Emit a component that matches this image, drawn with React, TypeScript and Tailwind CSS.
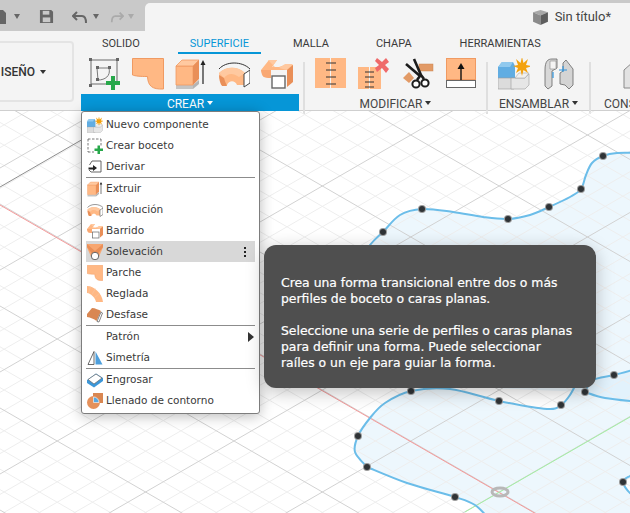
import type { ReactNode } from 'react'

type Pt = [number, number]

// catmull-rom through the points, as cubic segments
function spline(pts: Pt[], move = true) {
  let d = move ? `M${pts[0][0]} ${pts[0][1]}` : `L${pts[0][0]} ${pts[0][1]}`
  for (let i = 0; i < pts.length - 1; i++) {
    const p0 = pts[i - 1] || pts[i]
    const p1 = pts[i]
    const p2 = pts[i + 1]
    const p3 = pts[i + 2] || p2
    const c1x = p1[0] + (p2[0] - p0[0]) / 6
    const c1y = p1[1] + (p2[1] - p0[1]) / 6
    const c2x = p2[0] - (p3[0] - p1[0]) / 6
    const c2y = p2[1] - (p3[1] - p1[1]) / 6
    d += ` C${c1x} ${c1y} ${c2x} ${c2y} ${p2[0]} ${p2[1]}`
  }
  return d
}

const SLOPE = 0.577

function Viewport() {
  const upper: Pt[] = [[345, 280], [370, 245], [383, 232], [400, 215], [422, 209], [453, 212], [483, 217], [508, 219], [530, 215], [549, 207], [570, 197], [581, 189], [586, 175], [592, 163], [603, 156], [617, 153], [640, 153]]
  const lowerA: Pt[] = [[585, 392], [605, 398], [640, 402]]
  const lowerB: Pt[] = [[367, 467], [355, 452], [358, 436], [370, 418], [385, 403], [411, 391], [450, 389], [499, 401], [547, 409], [561, 405], [570, 395], [578, 380]]
  const rise: Pt[] = [[585, 392], [593, 380], [614, 375], [640, 368]]
  const edge: Pt[] = [[640, 472], [630, 476], [623, 482], [630, 493], [640, 497]]
  const bottom: Pt[] = [[367, 467], [407, 483], [455, 497], [475, 505], [490, 520]]

  const shapeA = `${spline(upper)} L660 153 L660 402 ${spline(lowerA.slice().reverse(), false)} L420 385 Z`
  const shapeB = `${spline(lowerB)} L593 380 ${spline(rise.slice(1), false)} L660 368 L660 472 ${spline(edge, false)} L640 530 L490 530 ${spline(bottom.slice().reverse(), false)} Z`

  const minor: number[] = []
  const major: number[] = []
  for (let i = -15; i < 60; i++) {
    if (i % 5 === 0) major.push(i)
    else minor.push(i)
  }

  const down = (c: number) => `M0 ${c}L630 ${c + 630 * SLOPE}`
  const up = (c: number) => `M0 ${c}L630 ${c - 630 * SLOPE}`

  const dots: Pt[] = [
    [383, 232], [422, 209], [508, 219], [549, 207], [581, 189], [603, 156],
    [411, 391], [499, 401], [561, 405], [585, 392], [614, 375],
    [358, 436], [367, 467], [455, 497], [623, 482],
  ]

  return (
    <svg className="absolute left-0 top-[111px]" width="630" height="402" viewBox="0 111 630 402">
      <path d={shapeA} fill="#d4ecfb" fillOpacity="0.42" />
      <path d={shapeB} fill="#d4ecfb" fillOpacity="0.42" />
      {minor.map((i) => (
        <g key={i} stroke="#eeeeee" strokeWidth="1" fill="none">
          <path d={down(-204 + i * 20.4)} />
          <path d={up(168 + i * 20.4)} />
        </g>
      ))}
      {major.map((i) => (
        <g key={i} stroke="#d2d2d2" strokeWidth="1" fill="none">
          <path d={down(-204 + i * 20.4)} />
          <path d={up(168 + i * 20.4)} />
        </g>
      ))}
      <path d="M0 187L90 135" stroke="#8e8e8e" strokeWidth="1" />
      <path d="M0 205L630 568" stroke="#f59a9a" strokeWidth="1" />
      <path d="M465 512L630 417" stroke="#a4f0a4" strokeWidth="1" />
      <path d={spline(upper)} fill="none" stroke="#6bbde9" strokeWidth="2" />
      <path d={spline(lowerA)} fill="none" stroke="#6bbde9" strokeWidth="2" />
      <path d={spline(lowerB)} fill="none" stroke="#6bbde9" strokeWidth="2" />
      <path d={spline(rise)} fill="none" stroke="#6bbde9" strokeWidth="2" />
      <path d={spline(edge)} fill="none" stroke="#6bbde9" strokeWidth="2" />
      <path d={spline(bottom)} fill="none" stroke="#6bbde9" strokeWidth="2" />
      {dots.map(([x, y]) => (
        <g key={`${x}-${y}`}>
          <circle cx={x} cy={y} r="4" fill="#9a9a9a" />
          <circle cx={x} cy={y} r="3" fill="#2f3336" />
        </g>
      ))}
      <ellipse cx="500" cy="492" rx="8" ry="4" fill="none" stroke="#b8b8b8" strokeWidth="3" />
    </svg>
  )
}

/* icons, drawn on a 32 box so the toolbar and the menu can share them */
function Ico({ size = 32, children }: { size?: number; children: ReactNode }) {
  return (
    <svg width={size} height={size} viewBox="0 0 32 32" className="shrink-0">
      {children}
    </svg>
  )
}

function SketchIcon() {
  return (
    <Ico>
      <path d="M2 2H28V26H2Z" fill="none" stroke="#6a6a6a" strokeWidth="1" />
      <path d="M8 10H20C22 18 16 22 9 22Z" fill="none" stroke="#7a7a7a" strokeWidth="1" />
      <g fill="#666">
        <rect x="0" y="0" width="3" height="3" />
        <rect x="27" y="0" width="3" height="3" />
        <rect x="0" y="26" width="3" height="3" />
        <rect x="7" y="8" width="3" height="3" />
        <rect x="19" y="8" width="3" height="3" />
        <rect x="7" y="20" width="3" height="3" />
      </g>
      <path d="M22 18H26V23H31V27H26V32H22V27H17V23H22Z" fill="#27a84a" />
    </Ico>
  )
}

function SketchMenuIcon() {
  return (
    <Ico size={16}>
      <path d="M2 2H28M2 2V28M28 2V16M2 28H14" fill="none" stroke="#555" strokeWidth="1.6" strokeDasharray="5 3" />
      <path d="M21 15H26V21H32V26H26V32H21V26H15V21H21Z" fill="#27a84a" />
    </Ico>
  )
}

function PatchIcon({ size = 32 }: { size?: number }) {
  return (
    <Ico size={size}>
      <path d="M0.5 0.5H31.5V31C20 31.5 16 28 15.5 18.5C8 18.5 3 18 0.5 17Z" fill="#ffb884" stroke="#f09a62" strokeWidth="1" />
    </Ico>
  )
}

function ExtrudeIcon({ size = 32 }: { size?: number }) {
  return (
    <Ico size={size}>
      <path d="M1 27H18V31H1Z" fill="#c4c4c4" />
      <path d="M18 27L24 22V26L18 31Z" fill="#b4b4b4" />
      <path d="M1 8H18V27H1Z" fill="#ffb884" stroke="#f09a62" strokeWidth="0.8" />
      <path d="M1 8L7 2H24L18 8Z" fill="#ffc9a0" stroke="#f09a62" strokeWidth="0.8" />
      <path d="M18 8L24 2V21L18 27Z" fill="#e98f58" />
      <path d="M28 26V4" stroke="#222" strokeWidth="1.2" />
      <path d="M25.5 7L28 2L30.5 7Z" fill="#222" />
    </Ico>
  )
}

function RevolveIcon({ size = 32 }: { size?: number }) {
  return (
    <Ico size={size}>
      <path d="M1 11C8 3 24 3 32 11" fill="none" stroke="#333" strokeWidth="1" />
      <path d="M1 15C8 8 20 8 27 15L26 27H19C17 22 11 22 9 27H3Z" fill="#ffb884" />
      <path d="M1 15C8 8 20 8 27 15L21 19C15 15 10 15 6 20Z" fill="#ffc9a0" />
      <path d="M1 17L6 20C7 24 8 25 9 28H4C2 25 1 21 1 17Z" fill="#e98f58" />
      <path d="M26 16L32 12V25L26 29Z" fill="#fff" stroke="#444" strokeWidth="1" />
    </Ico>
  )
}

function SweepIcon({ size = 32 }: { size?: number }) {
  return (
    <Ico size={size}>
      <path d="M0 12L8 2H16L11 9H18L24 7H32V24H26V12H6V19L2 18Z" fill="#ffb884" />
      <path d="M0 12C1 19 2 20 10 20V12Z" fill="#f9a873" />
      <path d="M7 2H16L11 9H14" fill="#ffc9a0" />
      <path d="M18 10L24 6H32L26 12Z" fill="#ffc9a0" />
      <path d="M26 12L32 7V24L26 29Z" fill="#e98f58" />
      <rect x="11" y="18" width="13" height="12" fill="#fff" stroke="#666" strokeWidth="1.4" />
    </Ico>
  )
}

function NewComponentIcon({ size = 32 }: { size?: number }) {
  return (
    <Ico size={size}>
      <path d="M0 9L4 4H15L17 8V20H0Z" fill="#61ade2" />
      <path d="M0 9L4 4H15L12 9Z" fill="#90c9ee" />
      <path d="M0 20H16V31H0Z" fill="#dcdcdc" stroke="#9a9a9a" strokeWidth="0.6" />
      <path d="M13 20H27L31 16V27L27 31H13Z" fill="#e6e6e6" stroke="#9a9a9a" strokeWidth="0.6" />
      <path d="M17 20L21 15H31L27 20Z" fill="#f0f0f0" stroke="#aaa" strokeWidth="0.6" />
      <path d="M24 -1L25.5 5L30 1L28 7L34 8L28 10L30 15L25.5 12L24 18L22.5 12L18 15L20 10L15 8L20 7L18 1L22.5 5Z" fill="#f3a20f" />
    </Ico>
  )
}

function StitchIcon() {
  return (
    <Ico>
      <rect x="0" y="0" width="15" height="30" fill="#ffb884" />
      <rect x="16" y="0" width="15" height="30" fill="#ffb884" />
      <path d="M11 5H21M11 12H21M11 19H21M11 26H21" stroke="#333" strokeWidth="1" />
    </Ico>
  )
}

function RemoveStitchIcon() {
  return (
    <Ico>
      <rect x="0" y="9" width="11" height="22" fill="#ffb884" />
      <rect x="12" y="9" width="11" height="22" fill="#ffb884" />
      <path d="M7 14H16M7 19H16M7 24H16M7 29H16" stroke="#333" strokeWidth="1" />
      <path d="M19 0L24 4L28 0L31 4L27 7L31 11L28 15L24 10L19 14L17 10L21 7L17 3Z" fill="#ef6a6a" />
    </Ico>
  )
}

function ScissorsIcon() {
  return (
    <Ico>
      <rect x="16" y="6" width="14" height="7" fill="#e29a66" stroke="#c98653" strokeWidth="0.5" />
      <path d="M0 20L6 14L11 20L6 25Z" fill="#e29a66" />
      <path d="M11 1L18 17L21 21" fill="none" stroke="#1c1c1c" strokeWidth="2.6" />
      <path d="M3 6L17 18L14 22" fill="none" stroke="#1c1c1c" strokeWidth="2.6" />
      <circle cx="13" cy="26" r="3.6" fill="#fff" stroke="#1c1c1c" strokeWidth="2" />
      <circle cx="22" cy="25" r="3.6" fill="#fff" stroke="#1c1c1c" strokeWidth="2" />
    </Ico>
  )
}

function PressIcon() {
  return (
    <Ico>
      <rect x="0.5" y="0.5" width="29" height="21" fill="#ffb884" stroke="#f09a62" />
      <rect x="0.5" y="22.5" width="29" height="7" fill="#fff" stroke="#666" />
      <path d="M15 22V8" stroke="#111" strokeWidth="1.4" />
      <path d="M11.5 11L15 5L18.5 11Z" fill="#111" />
    </Ico>
  )
}

function JointIcon() {
  return (
    <Ico>
      <path d="M1 12C1 3 4 1 8 1H13V10L8 13V28L4 31L1 28Z" fill="#d8d8d8" stroke="#666" strokeWidth="0.8" />
      <path d="M6 3H12V11H6Z" fill="#f4f4f4" stroke="#888" strokeWidth="0.6" />
      <path d="M16 15L19 13V5L22 2L29 11V27L25 31L21 27L16 26Z" fill="#d4d4d4" stroke="#666" strokeWidth="0.8" />
      <path d="M9 14V20" stroke="#2e94dd" strokeWidth="1.2" />
      <path d="M19 8V14M15 12H23" stroke="#2e94dd" strokeWidth="1.1" />
    </Ico>
  )
}

function DeriveIcon() {
  return (
    <Ico size={16}>
      <path d="M10 4H28V26H8L4 22" fill="#fff" stroke="#555" strokeWidth="1.8" />
      <path d="M10 4L5 12" stroke="#555" strokeWidth="1.8" />
      <path d="M3 17H12V12L20 18L12 24V21H3Z" fill="#222" />
    </Ico>
  )
}

function LoftIcon() {
  return (
    <Ico size={16}>
      <path d="M0 0H32V7L24 25H8L0 7Z" fill="#f7a670" />
      <path d="M0 0L16 14L32 0V6L20 22H12L0 6Z" fill="#e98f58" />
      <circle cx="16" cy="24" r="7.5" fill="#fff" stroke="#555" strokeWidth="1.8" />
    </Ico>
  )
}

function RuledIcon() {
  return (
    <Ico size={16}>
      <path d="M0 0C14 0 30 14 32 32H18C17 25 8 14 0 14Z" fill="#ffb884" />
      <path d="M7 1L3 14M17 5L10 17M26 14L15 23" stroke="#f4cba9" strokeWidth="1" />
    </Ico>
  )
}

function OffsetIcon() {
  return (
    <Ico size={16}>
      <path d="M0 14L10 2C16 2 24 6 28 8L19 28C14 24 7 21 0 20Z" fill="#d98752" />
      <path d="M28 10L31 12L24 30L20 29Z" fill="#fff" stroke="#555" strokeWidth="1.4" />
    </Ico>
  )
}

function MirrorIcon() {
  return (
    <Ico size={16}>
      <path d="M2 29L14 3V29Z" fill="#fff" stroke="#444" strokeWidth="1.6" />
      <path d="M17 3L31 29H17Z" fill="#4e9fdc" />
    </Ico>
  )
}

function ThickenIcon() {
  return (
    <Ico size={16}>
      <path d="M0 16L18 3L32 12V18L14 31L0 22Z" fill="#3d97d8" />
      <path d="M2 15L18 4L30 12L14 24Z" fill="#fff" stroke="#666" strokeWidth="1.4" />
    </Ico>
  )
}

function BoundaryIcon() {
  return (
    <Ico size={16}>
      <rect x="12" y="0" width="20" height="20" fill="#d98752" />
      <circle cx="13" cy="19" r="13" fill="#e5915b" />
      <path d="M13 8A11 11 0 0 1 24 19H13Z" fill="#58a9e2" stroke="#fff" strokeWidth="1.2" />
    </Ico>
  )
}

const uiFont = "font-['Roboto',sans-serif]"

function Group({ label, width, active, children }: { label: string; width: string; active?: boolean; children?: ReactNode }) {
  return (
    <div className={`flex flex-col shrink-0 ${width}`}>
      <div className={`flex items-start gap-[11px] h-[36px] ${active ? 'pl-[8px]' : 'pl-[10px]'}`}>{children}</div>
      <div
        className={`h-[17px] pt-[2px] flex items-center justify-center gap-[3px] text-[12px] ${active ? 'bg-[#0696d7] text-white' : 'text-[#444]'}`}
      >
        {label}
        <span className={`border-x-[3.5px] border-t-[4px] border-x-transparent mb-[2px] ${active ? 'border-t-white' : 'border-t-[#333]'}`} />
      </div>
    </div>
  )
}

function Sep() {
  return <div className="w-[2px] h-[52px] mt-[4px] bg-[#dfdfdf] shrink-0" />
}

function Toolbar() {
  return (
    <div className={`h-[80px] bg-[#f4f4f4] border-b border-[#cfcfcf] flex ${uiFont}`}>
      <div className="w-[82px] h-[61px] mt-[10px] shrink-0 -ml-[8px] rounded-[4px] border-2 border-[#e4e4e4] flex items-center justify-end pr-[26px] text-[12px] font-medium text-[#333]">
        ISEÑO
        <span className="ml-[5px] border-x-[3.5px] border-t-[4px] border-x-transparent border-t-[#333]" />
      </div>
      <div className="flex flex-col min-w-0 ml-[7px]">
        <div className="flex h-[23px] text-[11px] text-[#3a3a3a] relative">
          <span className="ml-[21px] mt-[5px]">SOLIDO</span>
          <span className="ml-[38px] pt-[5px] px-[12px] h-[23px] border-b-[2px] border-[#0696d7] text-[#0696d7]">SUPERFICIE</span>
          <span className="ml-[32px] mt-[5px]">MALLA</span>
          <span className="ml-[47px] mt-[5px]">CHAPA</span>
          <span className="ml-[48px] mt-[5px]">HERRAMIENTAS</span>
        </div>
        <div className="flex mt-[4px]">
          <Group label="CREAR" width="w-[218px]" active>
            <SketchIcon />
            <PatchIcon />
            <ExtrudeIcon />
            <RevolveIcon />
            <SweepIcon />
          </Group>
          <div className="w-[4px] shrink-0" />
          <Sep />
          <Group label="MODIFICAR" width="w-[181px]">
            <StitchIcon />
            <RemoveStitchIcon />
            <div className="ml-[2px]">
              <ScissorsIcon />
            </div>
            <PressIcon />
          </Group>
          <Sep />
          <Group label="ENSAMBLAR" width="w-[101px]">
            <NewComponentIcon />
            <div className="ml-[3px]">
              <JointIcon />
            </div>
          </Group>
          <Sep />
          <div className="flex flex-col pl-[13px]">
            <div className="h-[36px] pl-[19px]">
              <svg width="16" height="32" viewBox="0 0 16 32" className="shrink-0">
                <path d="M1 12L10 4H16V30H1Z" fill="#e2e2e2" stroke="#8a8a8a" strokeWidth="1" />
              </svg>
            </div>
            <div className="h-[17px] pt-[2px] flex items-center text-[12px] text-[#444]">CONS</div>
          </div>
        </div>
      </div>
    </div>
  )
}

function TitleBar() {
  return (
    <div className={`h-[31px] bg-[#c9c9c9] flex ${uiFont}`}>
      <div className="w-[145px] shrink-0 flex items-center pt-[2px] text-[#6b6b6b]">
        <svg width="6" height="16" viewBox="0 0 6 16" className="mr-[8px]">
          <path d="M0 1H3L6 4V15H0Z" fill="#666" />
        </svg>
        <span className="border-x-[3.5px] border-t-[5px] border-x-transparent border-t-[#666]" />
        <svg width="15" height="15" viewBox="0 0 16 16" className="ml-[19px]">
          <path d="M1 1H13L15 3V15H1Z" fill="#666" />
          <rect x="4" y="2" width="7" height="4" fill="#c9c9c9" />
          <rect x="4" y="9" width="8" height="5" fill="#c9c9c9" />
        </svg>
        <svg width="16" height="14" viewBox="0 0 16 14" className="ml-[18px]">
          <path d="M5 2L1 6L5 10M1 6H10C13 6 14 9 14 13" fill="none" stroke="#666" strokeWidth="2" />
        </svg>
        <span className="ml-[5px] border-x-[3.5px] border-t-[5px] border-x-transparent border-t-[#666]" />
        <svg width="14" height="14" viewBox="0 0 16 14" className="ml-[11px]">
          <path d="M11 2L15 6L11 10M15 6H6C3 6 2 9 2 13" fill="none" stroke="#aaa" strokeWidth="2" />
        </svg>
        <span className="ml-[4px] border-x-[3.5px] border-t-[5px] border-x-transparent border-t-[#aaa]" />
      </div>
      <div className="flex-1 mt-[3px] bg-[#f4f4f4] rounded-tl-[5px] flex items-center justify-end pr-[19px] gap-[5px] text-[13px] text-[#444]">
        <svg width="17" height="17" viewBox="0 0 16 16" className="mr-[1px]">
          <path d="M1 3L8 1L15 3L8 6Z" fill="#a8a8a8" />
          <path d="M1 3L8 6V15L1 12Z" fill="#8a8a8a" />
          <path d="M15 3L8 6V15L15 12Z" fill="#5e5e5e" />
        </svg>
        Sin título*
      </div>
    </div>
  )
}

function MenuRow({ icon, label, active, children }: { icon?: ReactNode; label: string; active?: boolean; children?: ReactNode }) {
  return (
    <div className={`h-[21px] flex items-center ${active ? 'bg-[#d8d8d8]' : ''}`}>
      <div className="w-[20px] pl-[1px] flex justify-start shrink-0">{icon}</div>
      <span className="pt-[1px]">{label}</span>
      {children}
    </div>
  )
}

function MenuSep() {
  return <div className="h-px bg-[#8c8c8c]" />
}

function CreateMenu() {
  return (
    <div className="absolute left-[81px] top-[111px] w-[179px] h-[303px] bg-white border border-[#7d7d7d] rounded-[3px] px-[4px] pt-[2px] shadow-[0_2px_14px_rgba(0,0,0,0.28)] font-['DejaVu_Sans',sans-serif] text-[10.5px] text-[#3a3a3a]">
      <MenuRow icon={<NewComponentIcon size={16} />} label="Nuevo componente" />
      <MenuRow icon={<SketchMenuIcon />} label="Crear boceto" />
      <MenuRow icon={<DeriveIcon />} label="Derivar" />
      <MenuSep />
      <MenuRow icon={<ExtrudeIcon size={16} />} label="Extruir" />
      <MenuRow icon={<RevolveIcon size={16} />} label="Revolución" />
      <MenuRow icon={<SweepIcon size={16} />} label="Barrido" />
      <MenuRow icon={<LoftIcon />} label="Solevación" active>
        <div className="ml-auto mr-[9px] flex flex-col gap-[2px]">
          <span className="w-[2px] h-[2px] bg-[#222]" />
          <span className="w-[2px] h-[2px] bg-[#222]" />
          <span className="w-[2px] h-[2px] bg-[#222]" />
        </div>
      </MenuRow>
      <MenuRow icon={<PatchIcon size={16} />} label="Parche" />
      <MenuRow icon={<RuledIcon />} label="Reglada" />
      <MenuRow icon={<OffsetIcon />} label="Desfase" />
      <MenuSep />
      <MenuRow label="Patrón">
        <span className="ml-auto mr-[1px] border-y-[5px] border-l-[6px] border-y-transparent border-l-[#333]" />
      </MenuRow>
      <MenuRow icon={<MirrorIcon />} label="Simetría" />
      <MenuSep />
      <MenuRow icon={<ThickenIcon />} label="Engrosar" />
      <MenuRow icon={<BoundaryIcon />} label="Llenado de contorno" />
    </div>
  )
}

function Tip() {
  return (
    <div className="absolute left-[264px] top-[245px] w-[332px] h-[143px] rounded-[12px] bg-[#4f4f4f] shadow-[0_4px_18px_rgba(0,0,0,0.25)] px-[17px] pt-[30px] font-['DejaVu_Sans',sans-serif] text-[12.4px] leading-[16px] text-white [-webkit-text-stroke:0.2px_white]">
      <p>Crea una forma transicional entre dos o más</p>
      <p>perfiles de boceto o caras planas.</p>
      <p className="mt-[16px]">Seleccione una serie de perfiles o caras planas</p>
      <p>para definir una forma. Puede seleccionar</p>
      <p>raíles o un eje para guiar la forma.</p>
    </div>
  )
}

export default function App() {
  return (
    <div className="relative w-[630px] h-[513px] overflow-hidden bg-white">
      <TitleBar />
      <Toolbar />
      <Viewport />
      <CreateMenu />
      <Tip />
    </div>
  )
}
